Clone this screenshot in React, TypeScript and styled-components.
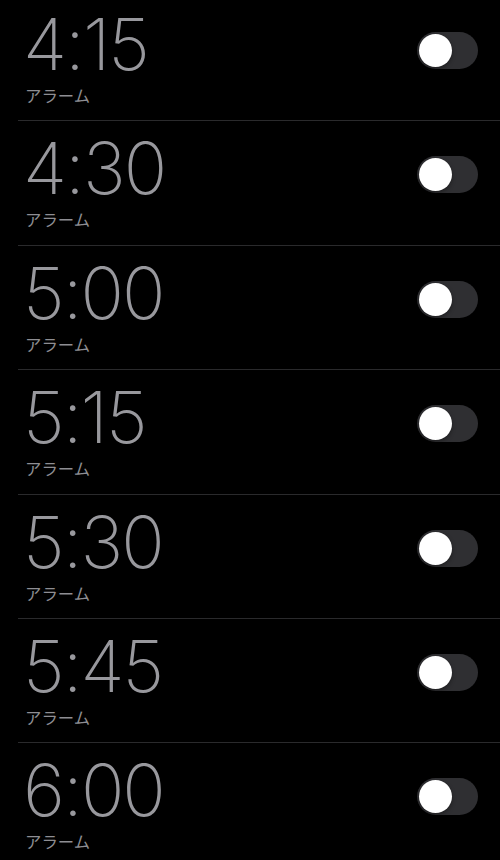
import React from 'react';
import styled, { createGlobalStyle } from 'styled-components';

const GlobalStyle = createGlobalStyle`
  html, body {
    margin: 0;
    padding: 0;
    background: #000;
  }
  body {
    font-family: Inter, "Noto Sans", "Noto Sans CJK JP", sans-serif;
    -webkit-font-smoothing: antialiased;
  }
`;

const Screen = styled.div`
  width: 500px;
  height: 860px;
  overflow: hidden;
  background: #000;
`;

const List = styled.ul`
  list-style: none;
  margin: -3px 0 0;
  padding: 0;
`;

const Row = styled.li`
  height: 123.4px;
  margin-left: 18px;
  padding: 0 22px 0 5px;
  display: flex;
  justify-content: space-between;
  align-items: flex-start;
  border-bottom: 1px solid #2a2a2c;
`;

const Info = styled.div`
  display: flex;
  flex-direction: column;
  padding-top: 17px;
`;

const Time = styled.div`
  font-family: Inter, "Noto Sans", sans-serif;
  font-weight: 200;
  font-size: 72px;
  line-height: 60px;
  letter-spacing: -2px;
  color: #98989d;
`;

const Label = styled.div`
  margin-top: 12px;
  padding-left: 2px;
  font-family: "Noto Sans CJK JP", sans-serif;
  font-size: 16.4px;
  line-height: 18px;
  color: #8e8e93;
`;

const Track = styled.button<{ $on: boolean }>`
  margin-top: 35px;
  width: 61px;
  height: 37px;
  border: none;
  border-radius: 19px;
  padding: 2px;
  background: ${({ $on }) => ($on ? '#34c759' : '#2f2f32')};
  display: flex;
  justify-content: ${({ $on }) => ($on ? 'flex-end' : 'flex-start')};
  cursor: pointer;
`;

const Knob = styled.span`
  width: 33px;
  height: 33px;
  border-radius: 50%;
  background: #fff;
  box-shadow: 0 2px 4px rgba(0, 0, 0, 0.35);
`;

const alarms = ['4:15', '4:30', '5:00', '5:15', '5:30', '5:45', '6:00'];

export default function App() {
  return (
    <Screen>
      <GlobalStyle />
      <List>
        {alarms.map((t) => (
          <Row key={t}>
            <Info>
              <Time>{t}</Time>
              <Label>アラーム</Label>
            </Info>
            <Track $on={false} aria-label={`${t} アラーム`}>
              <Knob />
            </Track>
          </Row>
        ))}
      </List>
    </Screen>
  );
}
